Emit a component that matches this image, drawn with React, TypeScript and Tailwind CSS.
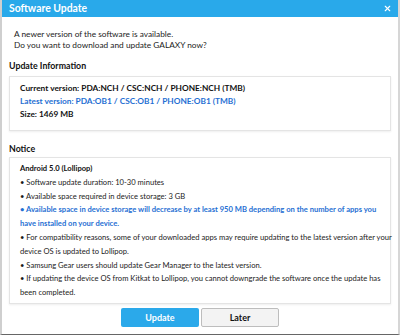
import { X } from 'lucide-react'

// visual lines of the notice box, wrapped as in the installer window
const NOTICE: { lines: string[]; strong?: boolean }[] = [
  { lines: ['• Software update duration: 10-30 minutes'] },
  { lines: ['• Available space required in device storage: 3 GB'] },
  {
    lines: [
      '• Available space in device storage will decrease by at least 950 MB depending on the number of apps you',
      'have installed on your device.',
    ],
    strong: true,
  },
  {
    lines: [
      '• For compatibility reasons, some of your downloaded apps may require updating to the latest version after your',
      'device OS is updated to Lollipop.',
    ],
  },
  { lines: ['• Samsung Gear users should update Gear Manager to the latest version.'] },
  {
    lines: [
      '• If updating the device OS from Kitkat to Lollipop, you cannot downgrade the software once the update has',
      'been completed.',
    ],
  },
]

export default function App() {
  return (
    <div className="w-[400px] h-[335px] bg-white font-['Lato',sans-serif] text-[#1c1c1c] flex flex-col border-l-2 border-l-[#cfcfcf] border-r-2 border-r-[#d6d6d6] border-b border-b-[#666]">
      {/* Title bar */}
      <div className="h-[17px] shrink-0 bg-[#29a9ea] flex items-center justify-between pl-[7px] pr-[6px]">
        <span className="text-white font-bold text-[10.4px] leading-none">Software Update</span>
        <X className="w-[9px] h-[9px] text-white" strokeWidth={3} />
      </div>

      <div className="flex-1 flex flex-col pl-[7px] pr-[7px]">
        <div className="pl-[5px] pt-[12px] text-[8.3px] leading-[11px] whitespace-nowrap">
          <p>A newer version of the software is available.</p>
          <p>Do you want to download and update GALAXY now?</p>
        </div>

        <h3 className="mt-[9px] font-bold text-[8.8px] leading-[12px] text-[#111]">Update Information</h3>
        <div className="mt-[4px] border border-[#e4e4e4] shadow-[0_1px_2px_rgba(0,0,0,0.07)] px-[10px] pt-[5px] pb-[9px] text-[8.3px] font-bold leading-[13px] whitespace-nowrap">
          <p className="text-[#111]">Current version: PDA:NCH / CSC:NCH / PHONE:NCH (TMB)</p>
          <p className="text-[#1f6fd3]">Latest version: PDA:OB1 / CSC:OB1 / PHONE:OB1 (TMB)</p>
          <p className="text-[#111]">Size: 1469 MB</p>
        </div>

        <h3 className="mt-[12px] font-bold text-[8.8px] leading-[12px] text-[#111]">Notice</h3>
        <div className="mt-[2px] border border-[#e4e4e4] shadow-[0_1px_2px_rgba(0,0,0,0.07)] pl-[10px] pr-[4px] pt-[4px] pb-[3px] text-[7.6px] leading-[13.8px] whitespace-nowrap">
          <p className="font-bold text-[#111]">Android 5.0 (Lollipop)</p>
          {NOTICE.map((n, i) =>
            n.lines.map((line, j) => (
              <p key={`${i}-${j}`} className={n.strong ? 'font-bold text-[#1f6fd3]' : ''}>
                {line}
              </p>
            ))
          )}
        </div>

        <div className="mt-[4px] flex justify-center gap-[2px]">
          <button className="w-[78px] h-[19px] bg-[#2ba9ea] text-white font-bold text-[9px] rounded-[2px]">
            Update
          </button>
          <button className="w-[78px] h-[19px] bg-[#f3f3f3] border border-[#bdbdbd] text-[#111] font-bold text-[9px] rounded-[2px]">
            Later
          </button>
        </div>
      </div>
    </div>
  )
}
